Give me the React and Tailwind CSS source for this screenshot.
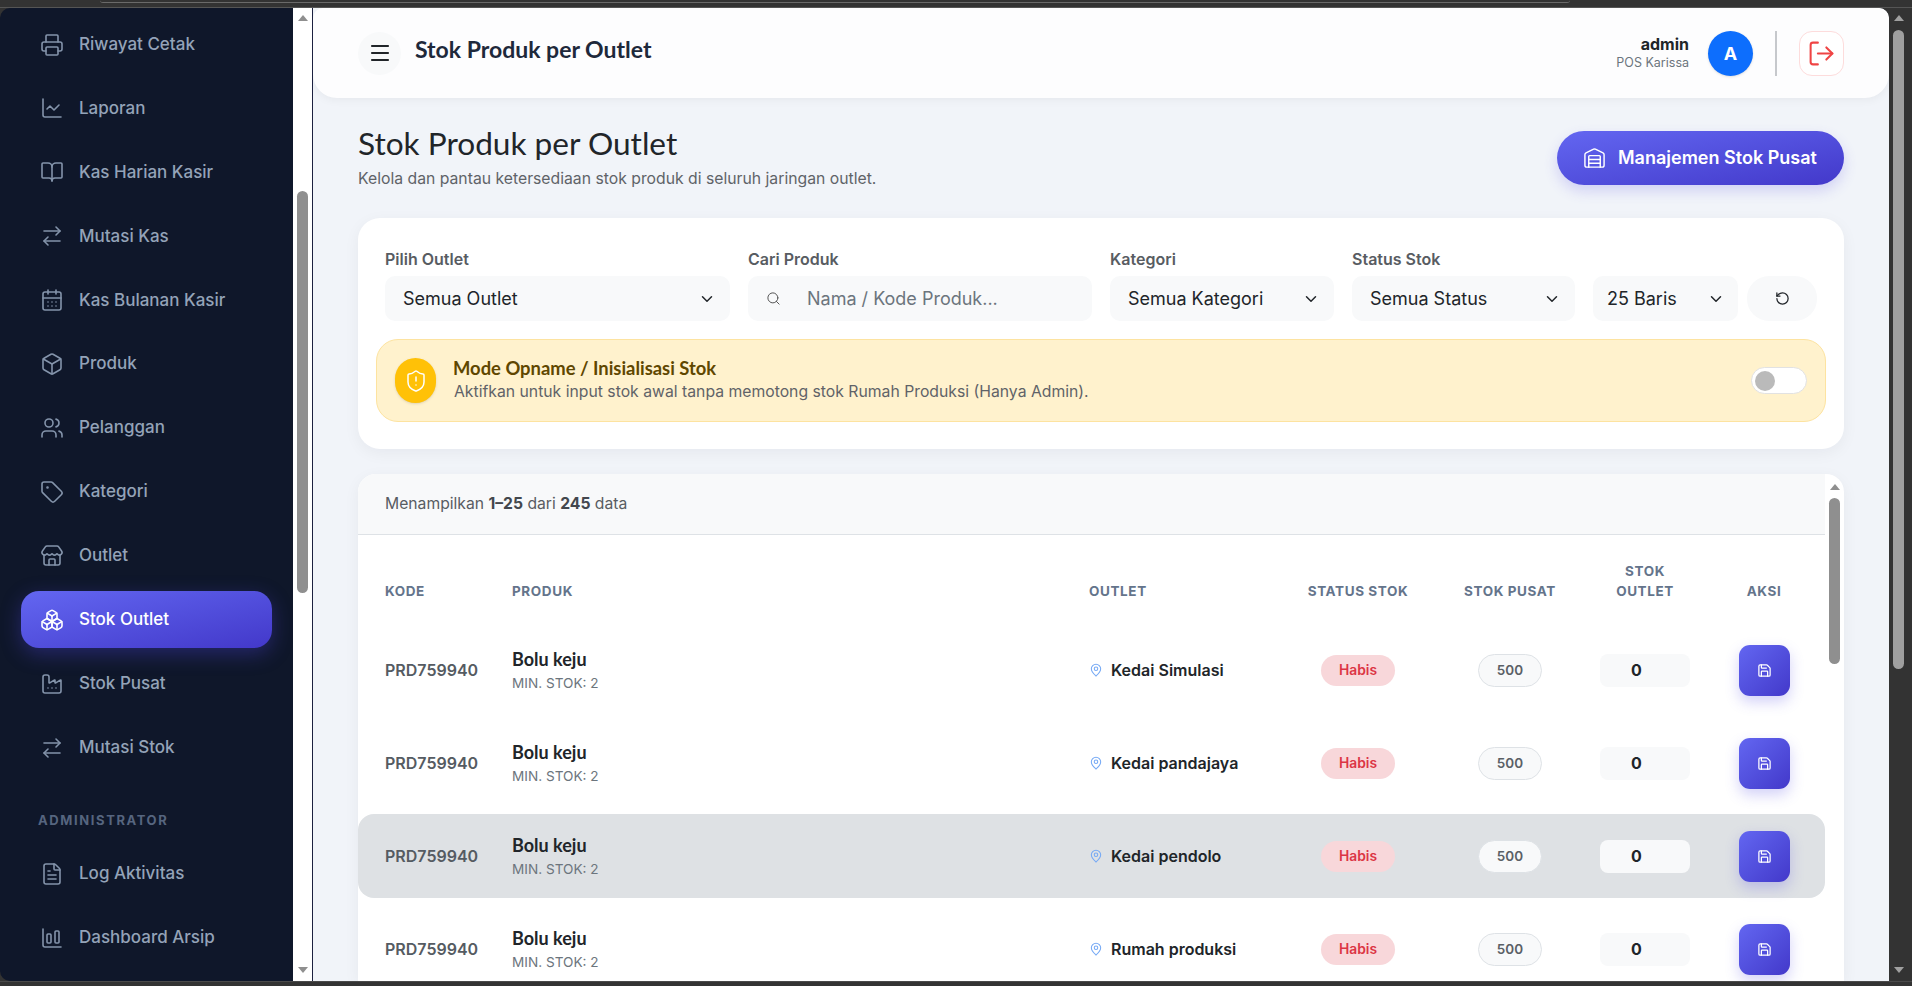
import React from "react";
import {
  Printer, ChartLine, BookOpen, ArrowRightLeft, CalendarDays, Box, Users, Tag, Store, Boxes,
  Factory, FileText, ChartColumnBig, Menu, LogOut, Warehouse, ChevronDown, Search, RotateCcw,
  ShieldAlert, MapPin, Save,
} from "lucide-react";

const menuItems = [
  { label: "Riwayat Cetak", icon: Printer },
  { label: "Laporan", icon: ChartLine },
  { label: "Kas Harian Kasir", icon: BookOpen },
  { label: "Mutasi Kas", icon: ArrowRightLeft },
  { label: "Kas Bulanan Kasir", icon: CalendarDays },
  { label: "Produk", icon: Box },
  { label: "Pelanggan", icon: Users },
  { label: "Kategori", icon: Tag },
  { label: "Outlet", icon: Store },
  { label: "Stok Outlet", icon: Boxes, active: true },
  { label: "Stok Pusat", icon: Factory },
  { label: "Mutasi Stok", icon: ArrowRightLeft },
];

const adminItems = [
  { label: "Log Aktivitas", icon: FileText },
  { label: "Dashboard Arsip", icon: ChartColumnBig },
];

const rows = [
  { outlet: "Kedai Simulasi" },
  { outlet: "Kedai pandajaya" },
  { outlet: "Kedai pendolo", hover: true },
  { outlet: "Rumah produksi" },
];

const gridCols = "grid grid-cols-[154px_577px_202px_134px_170px_100px_1fr]";
const headingFont = "font-['Lato',sans-serif]";

const ArrowUp = ({ color = "border-b-[#8f8f8f]" }) => (
  <div className={`w-0 h-0 border-x-[5px] border-x-transparent border-b-[6px] ${color}`}></div>
);

const ArrowDown = ({ color = "border-t-[#8f8f8f]" }) => (
  <div className={`w-0 h-0 border-x-[5px] border-x-transparent border-t-[6px] ${color}`}></div>
);

const NavItem = ({ item }) => {
  const Icon = item.icon;
  return (
    <div
      className={`h-[57px] mx-[21px] pl-[19px] flex items-center gap-[15px] rounded-[18px] text-[17px] font-medium ${
        item.active
          ? "bg-gradient-to-br from-[#6366f1] to-[#4338ca] text-white shadow-[0_6px_20px_rgba(79,70,229,0.35)]"
          : "text-[#94a3b8]"
      }`}
    >
      <Icon size={24} strokeWidth={1.6} className={item.active ? "text-white" : "text-[#8494ab]"} />
      <span>{item.label}</span>
    </div>
  );
};

const Sidebar = () => (
  <div className="flex shrink-0 h-full">
    <aside className="w-[293px] h-full bg-[#0f172a] rounded-l-[10px] pt-[8px] flex flex-col gap-[6.95px] overflow-hidden">
      {menuItems.map((item) => (
        <NavItem key={item.label} item={item} />
      ))}
      <div className="pl-[38px] mt-[28px] mb-[9px] h-[18px] flex items-center text-[13px] font-bold tracking-[1.6px] text-[#56657f]">
        ADMINISTRATOR
      </div>
      {adminItems.map((item) => (
        <NavItem key={item.label} item={item} />
      ))}
    </aside>
    <div className="w-[19px] h-full bg-white flex flex-col items-center pt-[7px] pb-[8px]">
      <ArrowUp />
      <div className="w-[11px] h-[402px] mt-[170px] rounded-full bg-[#8f8f8f]"></div>
      <div className="flex-1"></div>
      <ArrowDown />
    </div>
    <div className="w-px h-full bg-[#1c2140]"></div>
  </div>
);

const Topbar = () => (
  <header className="h-[90px] shrink-0 bg-[#fdfdfe] rounded-t-[10px] rounded-b-[24px] pl-[45px] pr-[45px] flex items-center justify-between shadow-[0_2px_10px_rgba(0,0,0,0.05)]">
    <div className="flex items-center gap-[14px]">
      <div className="w-[43px] h-[43px] rounded-full bg-[#f8f9fa] flex items-center justify-center">
        <Menu size={24} strokeWidth={2.2} className="text-[#212529]" />
      </div>
      <div className={`${headingFont} mb-[8px] text-[23px] font-bold text-[#1e293b]`}>Stok Produk per Outlet</div>
    </div>
    <div className="flex items-center">
      <div className="text-right mr-[19px]">
        <div className="text-[16px] leading-[20px] font-bold text-[#212529]">admin</div>
        <div className="text-[12.5px] leading-[18px] text-[#6c757d]">POS Karissa</div>
      </div>
      <div className="w-[45px] h-[45px] rounded-full bg-[#0d6efd] flex items-center justify-center text-white text-[18px] font-bold shadow-sm">
        A
      </div>
      <div className="w-[2px] h-[45px] bg-[#c6c8cc] ml-[22px] mr-[22px]"></div>
      <div className="w-[45px] h-[45px] rounded-[13px] bg-white border border-[#fddcdc] flex items-center justify-center">
        <LogOut size={29} strokeWidth={1.7} className="text-[#ef4444]" />
      </div>
    </div>
  </header>
);

const Field = ({ label, width, children }) => (
  <div style={{ width }} className="shrink-0">
    <div className="h-[27px] text-[16px] font-semibold leading-[20px] text-[#585c62]">{label}</div>
    {children}
  </div>
);

const SelectBox = ({ text, pad = "pl-[18px] pr-[14px]" }) => (
  <div className={`h-[45px] rounded-[10px] bg-[#f8f9fa] flex items-center justify-between ${pad} text-[18px] text-[#212529]`}>
    <span>{text}</span>
    <ChevronDown size={18} strokeWidth={2} className="text-[#212529]" />
  </div>
);

const Filters = () => (
  <section className="h-[231px] shrink-0 bg-white rounded-[22px] shadow-[0_4px_16px_rgba(15,23,42,0.05)] pt-[31px] px-[27px]">
    <div className="flex gap-[18px] items-end">
      <Field label="Pilih Outlet" width={345}>
        <SelectBox text="Semua Outlet" />
      </Field>
      <Field label="Cari Produk" width={344}>
        <div className="h-[45px] rounded-[10px] bg-[#f8f9fa] flex items-center pl-[18px] gap-[26px] text-[18px] text-[#6c757d]">
          <Search size={15} strokeWidth={1.6} className="text-[#555]" />
          <span>Nama / Kode Produk...</span>
        </div>
      </Field>
      <Field label="Kategori" width={224}>
        <SelectBox text="Semua Kategori" />
      </Field>
      <Field label="Status Stok" width={223}>
        <SelectBox text="Semua Status" />
      </Field>
      <Field label="" width={145}>
        <SelectBox text="25 Baris" pad="pl-[14px] pr-[13px]" />
      </Field>
      <div className="w-[70px] h-[45px] -ml-[9px] rounded-[22px] bg-[#f8f9fa] flex items-center justify-center">
        <RotateCcw size={15} strokeWidth={2} className="text-[#212529]" />
      </div>
    </div>
    <div className="-mx-[9px] mt-[18px] h-[83px] rounded-[22px] bg-[#fff2cd] border border-[#fde3a0] flex items-center pl-[18px] pr-[18px]">
      <div className="w-[41px] h-[45px] shrink-0 rounded-full bg-[#ffc107] flex items-center justify-center shadow-sm">
        <ShieldAlert size={24} strokeWidth={1.5} className="text-white" />
      </div>
      <div className="ml-[18px] mb-[4px] flex-1">
        <div className={`${headingFont} -ml-[1px] text-[18.4px] leading-[24px] font-bold text-[#5f4700]`}>Mode Opname / Inisialisasi Stok</div>
        <div className="mt-[1px] text-[15.75px] leading-[21px] text-[#5f6368]">
          Aktifkan untuk input stok awal tanpa memotong stok Rumah Produksi (Hanya Admin).
        </div>
      </div>
      <div className="w-[56px] h-[27px] rounded-full bg-white border border-[#e2e2e2] flex items-center pl-[3px]">
        <div className="w-[20px] h-[20px] rounded-full bg-[#bababa]"></div>
      </div>
    </div>
  </section>
);

const Row = ({ row }) => (
  <div className={`${gridCols} items-center h-[84px] rounded-[16px] ${row.hover ? "bg-[#dee1e4]" : ""}`}>
    <div className="pl-[27px] text-[16px] font-semibold text-[#555b62]">PRD759940</div>
    <div>
      <div className={`${headingFont} text-[18px] leading-[24px] font-bold text-[#212529]`}>Bolu keju</div>
      <div className="mt-[2px] text-[13.6px] leading-[20px] text-[#6c757d]">MIN. STOK: 2</div>
    </div>
    <div className="flex items-center gap-[8px] text-[16px] font-semibold text-[#212529]">
      <MapPin size={14} strokeWidth={1.8} className="text-[#75a9f5]" />
      <span className="mb-[1px]">{row.outlet}</span>
    </div>
    <div className="flex justify-center">
      <span className="w-[74px] h-[31px] rounded-full bg-[#f8d7da] flex items-center justify-center text-[13.8px] font-semibold text-[#dc3545]">
        Habis
      </span>
    </div>
    <div className="flex justify-center">
      <span className="w-[64px] h-[33px] rounded-full bg-[#f8f9fa] border border-[#dee2e6] flex items-center justify-center text-[13.5px] font-semibold text-[#5a6066]">
        500
      </span>
    </div>
    <div className="flex justify-center">
      <div className="w-[90px] h-[33px] rounded-[8px] bg-[#f8f9fa] flex items-center justify-center pr-[17px] text-[16px] font-bold text-[#212529]">
        0
      </div>
    </div>
    <div className="flex justify-center pl-[8px]">
      <div className="w-[51px] h-[51px] rounded-[11px] bg-gradient-to-br from-[#6366f1] to-[#4338ca] flex items-center justify-center shadow-[0_6px_14px_rgba(79,70,229,0.25)]">
        <Save size={15} strokeWidth={2} className="text-white" />
      </div>
    </div>
  </div>
);

const TableCard = () => (
  <section className="flex-1 min-h-0 mt-[25px] bg-white rounded-t-[18px] shadow-[0_4px_16px_rgba(15,23,42,0.05)] flex overflow-hidden">
    <div className="flex-1 min-w-0">
      <div className="h-[61px] bg-[#f8f9fa] border-b border-[#dee2e6] pl-[27px] flex items-center text-[15.7px] text-[#585c62]">
        <span>
          Menampilkan <b className="font-bold text-[#43474d]">1–25</b> dari <b className="font-bold text-[#43474d]">245</b> data
        </span>
      </div>
      <div className={`${gridCols} items-end h-[84px] mb-[9px] pb-[18px] text-[13.5px] leading-[20px] font-bold tracking-[0.6px] text-[#64748b]`}>
        <div className="pl-[27px]">KODE</div>
        <div>PRODUK</div>
        <div>OUTLET</div>
        <div className="text-center">STATUS STOK</div>
        <div className="text-center">STOK PUSAT</div>
        <div className="text-center">
          STOK
          <br />
          OUTLET
        </div>
        <div className="text-center pl-[8px]">AKSI</div>
      </div>
      <div className="flex flex-col gap-[9px]">
        {rows.map((row) => (
          <Row key={row.outlet} row={row} />
        ))}
      </div>
    </div>
    <div className="w-[19px] shrink-0 flex flex-col items-center pt-[10px]">
      <ArrowUp />
      <div className="w-[11px] h-[166px] mt-[8px] rounded-full bg-[#8f8f8f]"></div>
    </div>
  </section>
);

export default function App() {
  return (
    <div className="w-full h-screen bg-[#333333] flex flex-col overflow-hidden font-['Inter',sans-serif]">
      {/* browser frame above the page */}
      <div className="h-[8px] shrink-0 border-b border-[#555555]">
        <div className="ml-[100px] mr-[342px] h-[3px] border-b border-[#6a6a6a] rounded-b-[3px]"></div>
      </div>
      <div className="flex-1 min-h-0 flex">
        <Sidebar />
        <div className="flex-1 min-w-0 h-full flex flex-col bg-[#f1f4f9] overflow-hidden rounded-tr-[10px]">
          <Topbar />
          <main className="flex-1 min-h-0 px-[45px] pt-[26px] flex flex-col overflow-hidden">
            <div className="h-[94px] shrink-0 flex items-start justify-between">
              <div>
                <h1 className={`${headingFont} text-[31.6px] leading-[38px] font-normal text-[#212529]`}>Stok Produk per Outlet</h1>
                <p className="mt-[6px] text-[15.75px] leading-[22px] text-[#5f6368]">
                  Kelola dan pantau ketersediaan stok produk di seluruh jaringan outlet.
                </p>
              </div>
              <div className="mt-[7px] w-[287px] h-[54px] rounded-full bg-gradient-to-br from-[#6366f1] to-[#4338ca] flex items-center pl-[26px] gap-[12px] text-white text-[18px] font-semibold shadow-[0_6px_14px_rgba(79,70,229,0.2)]">
                <Warehouse size={23} strokeWidth={1.5} />
                <span className="mb-[1px]">Manajemen Stok Pusat</span>
              </div>
            </div>
            <Filters />
            <TableCard />
          </main>
        </div>
        <div className="w-[19px] shrink-0 h-full flex flex-col items-center pt-[7px] pb-[8px]">
          <ArrowUp color="border-b-[#a0a0a0]" />
          <div className="w-[11px] h-[639px] mt-[9px] rounded-full bg-[#a0a0a0]"></div>
          <div className="flex-1"></div>
          <ArrowDown color="border-t-[#a0a0a0]" />
        </div>
        <div className="w-[4px] shrink-0"></div>
      </div>
      <div className="h-[5px] shrink-0 border-t border-[#4a4a4a]"></div>
    </div>
  );
}
